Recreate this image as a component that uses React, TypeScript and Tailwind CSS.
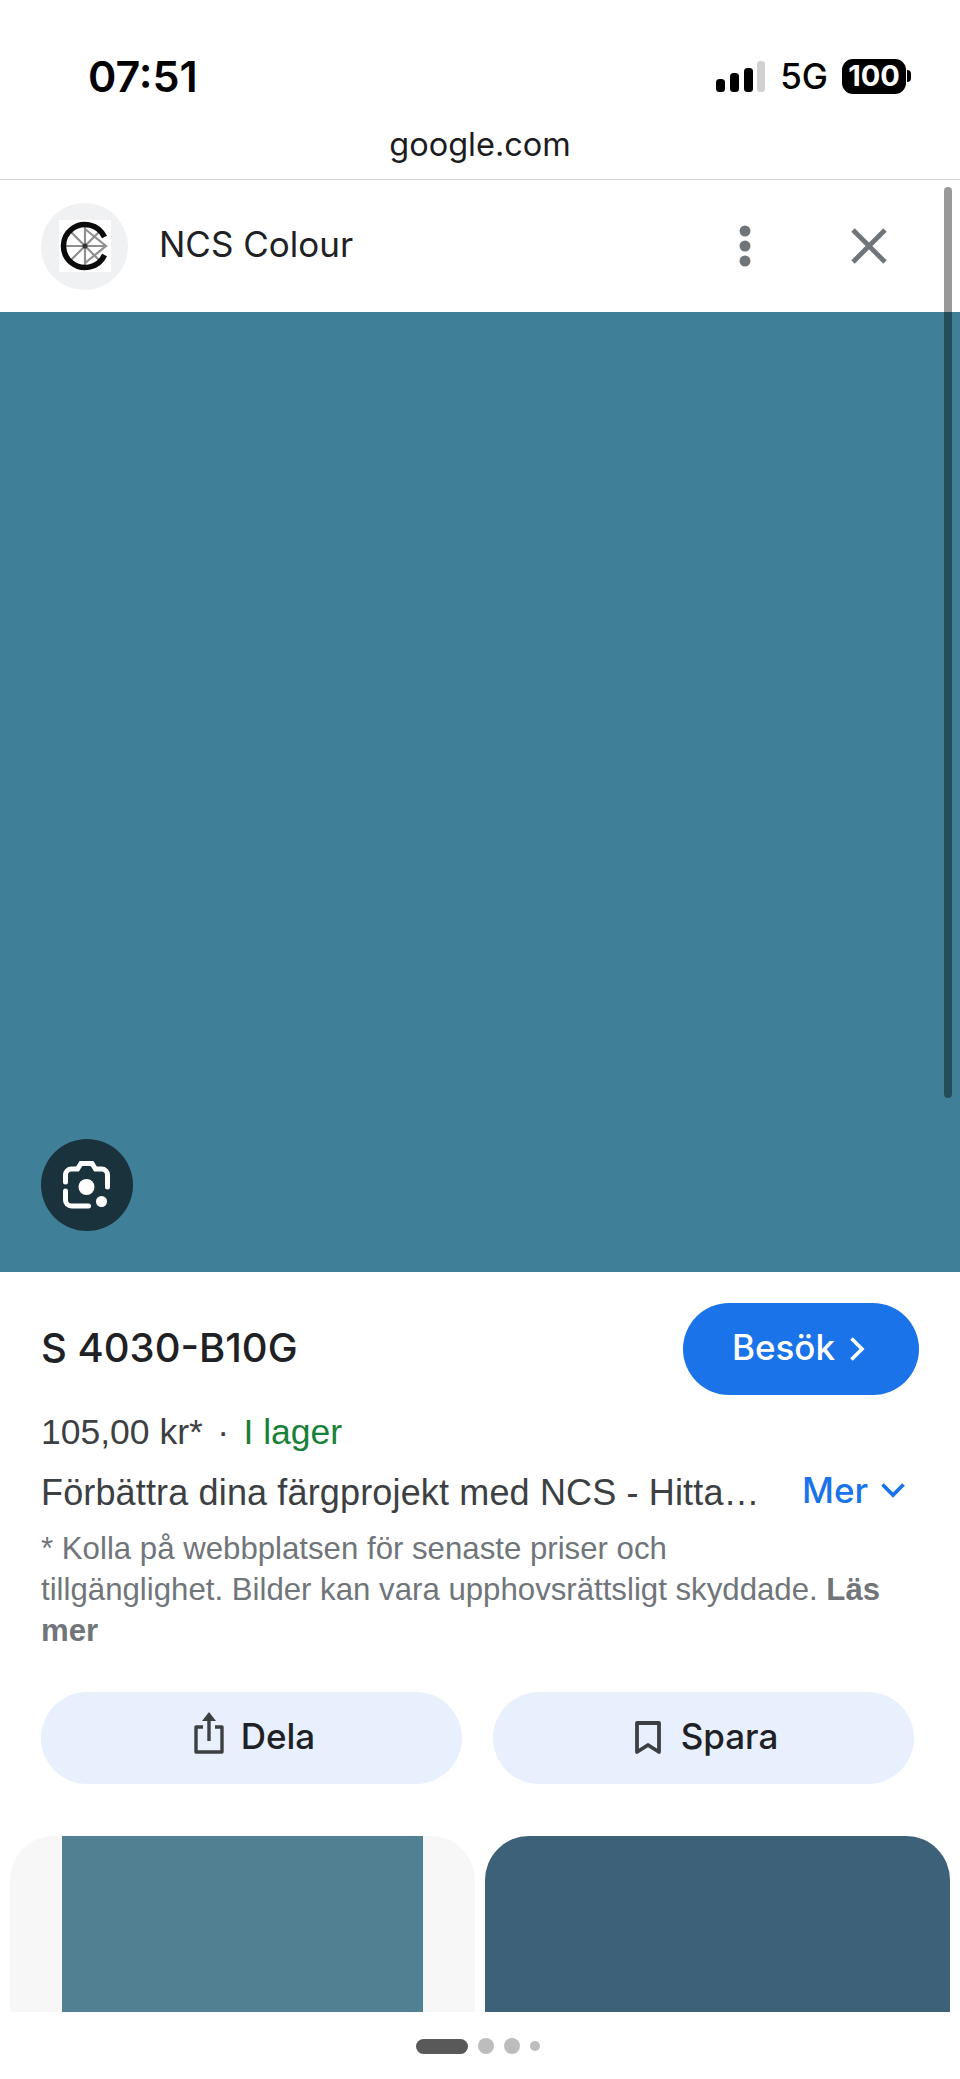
import React from 'react';

// ─── Icons ────────────────────────────────────────────────────────────────────

const SignalIcon = () => (
    <svg width="49" height="31" viewBox="0 0 49 31" className="block">
        <rect x="0" y="18" width="9" height="13" rx="3.5" fill="#000" />
        <rect x="14" y="12" width="9" height="19" rx="3.5" fill="#000" />
        <rect x="28" y="7" width="9" height="24" rx="3.5" fill="#000" />
        <rect x="41" y="0" width="8" height="31" rx="3.5" fill="#d0d0d0" />
    </svg>
);

const NcsLogo = () => (
    <svg width="52" height="52" viewBox="0 0 52 52" className="block bg-white">
        <g stroke="#8f8f8f" strokeWidth="2.2" fill="none">
            <path d="M6 26H47M26 6V46M12 12L40 40M12 40L40 12" />
            <path d="M26 9L47 26L26 43" />
        </g>
        <circle cx="26" cy="26" r="2.5" fill="#333" />
        <path d="M45.500 17A21.500 21.500 0 1 0 45.500 35" fill="none" stroke="#0b0b0b" strokeWidth="5.500" />
    </svg>
);

const MoreIcon = () => (
    <svg width="14" height="44" viewBox="0 0 14 44" className="block">
        <circle cx="7" cy="7" r="5.500" fill="#70757a" />
        <circle cx="7" cy="22" r="5.500" fill="#70757a" />
        <circle cx="7" cy="37" r="5.500" fill="#70757a" />
    </svg>
);

const CloseIcon = () => (
    <svg width="38" height="38" viewBox="0 0 38 38" className="block">
        <path d="M3 3L35 35M35 3L3 35" stroke="#70757a" strokeWidth="4.800" fill="none" />
    </svg>
);

const LensIcon = () => (
    <svg width="48" height="50" viewBox="0 0 48 50" className="block">
        <g fill="none" stroke="#fff" strokeWidth="5" strokeLinecap="round">
            <path d="M2.500 22V15a6 6 0 0 1 6-6h6l3.500-5.500h11L32.500 9h6a6 6 0 0 1 6 6v12" />
            <path d="M2.500 31v9a6 6 0 0 0 6 6h17" />
        </g>
        <circle cx="23.500" cy="27" r="8" fill="#fff" />
        <circle cx="38.500" cy="41.500" r="5.500" fill="#fff" />
    </svg>
);

const ShareIcon = () => (
    <svg width="30" height="42" viewBox="0 0 30 42" className="block -mt-[10px]">
        <g fill="none" stroke="#3c4043" strokeWidth="3.400">
            <path d="M9 15H2V40H28V15H21" strokeLinejoin="round" />
            <path d="M15 29V3" />
        </g>
        <path d="M15 0L22 9H8Z" fill="#3c4043" />
    </svg>
);

const BookmarkIcon = () => (
    <svg width="26" height="35" viewBox="0 0 26 35" className="block">
        <path d="M2 2H24V31L13 24L2 31Z" fill="none" stroke="#3c4043" strokeWidth="3.800" strokeLinejoin="round" />
    </svg>
);

// ─── Page ─────────────────────────────────────────────────────────────────────

const App: React.FC = () => {
    return (
        <div className="relative w-[960px] h-[2079px] overflow-hidden bg-white font-['Inter',sans-serif] text-[#1f1f1f]">

            {/* Status bar */}
            <div className="h-[112px] pl-[88px] pr-[49px] pt-[50px] flex items-start justify-between">
                <span className="text-[43px] leading-[52px] font-semibold text-black">07:51</span>
                <div className="flex items-center h-[52px]">
                    <SignalIcon />
                    <span className="ml-[15px] text-[35px] font-medium text-black">5G</span>
                    <div className="ml-[14px] w-[64px] h-[35px] rounded-[11px] bg-black text-white text-[29px] font-bold flex items-center justify-center">100</div>
                    <div className="ml-[1px] w-[4px] h-[12px] rounded-r-full bg-black" />
                </div>
            </div>

            {/* URL bar */}
            <div className="h-[68px] border-b border-[#d6d6d6] flex items-center justify-center pb-[2px]">
                <span className="text-[32.5px] leading-[40px] text-[#1c1c1e]">google.com</span>
            </div>

            {/* Result header */}
            <div className="h-[132px] pl-[41px] pr-[72px] flex items-center">
                <div className="w-[87px] h-[87px] rounded-full bg-[#f0f1f2] flex items-center justify-center">
                    <NcsLogo />
                </div>
                <span className="ml-[31px] -mt-[3px] text-[35px] text-[#202124]">NCS Colour</span>
                <div className="ml-auto flex items-center gap-[98px]">
                    <MoreIcon />
                    <CloseIcon />
                </div>
            </div>

            {/* Main image */}
            <div className="h-[960px] bg-[#3f7f98] pl-[41px] pt-[827px]">
                <div className="w-[92px] h-[92px] rounded-full bg-[#1a323c] flex items-center justify-center">
                    <LensIcon />
                </div>
            </div>

            {/* Product info */}
            <div className="pl-[41px] pr-[41px] pt-[31px] flex items-center justify-between">
                <span className="text-[40px] font-medium text-[#202124] -mt-[2px]">S 4030-B10G</span>
                <button className="w-[236px] h-[92px] rounded-full bg-[#1a73e8] text-white text-[35px] font-medium flex items-center justify-center gap-[14px]">
                    <span className="-mt-[3px] -ml-[5px]">Besök</span>
                    <svg width="16" height="26" viewBox="0 0 16 26"><path d="M2.500 2.500L13 13L2.500 23.500" fill="none" stroke="#fff" strokeWidth="3.600" /></svg>
                </button>
            </div>

            <div className="pl-[41px] mt-[17px] font-['Liberation_Sans',sans-serif] text-[35.5px] leading-[40px] text-[#3c4043]">
                105,00 kr* <span className="mx-[4.500px]">·</span> <span className="text-[#188038]">I lager</span>
            </div>

            <div className="pl-[41px] pr-[54px] mt-[21px] flex items-center justify-between">
                <span className="font-['Liberation_Sans',sans-serif] text-[36px] tracking-[0.15px] leading-[40px] text-[#3c4043]">Förbättra dina färgprojekt med NCS - Hitta…</span>
                <span className="flex items-center gap-[12px] text-[35px] leading-[40px] font-medium text-[#1a73e8] -mt-[6px]">
                    Mer
                    <svg width="26" height="16" viewBox="0 0 26 16"><path d="M2.500 2.500L13 13L23.500 2.500" fill="none" stroke="#1a73e8" strokeWidth="3.800" /></svg>
                </span>
            </div>

            <p className="pl-[41px] pr-[30px] mt-[15px] font-['Liberation_Sans',sans-serif] text-[31.2px] leading-[41px] text-[#70757a]">
                * Kolla på webbplatsen för senaste priser och<br />
                tillgänglighet. Bilder kan vara upphovsrättsligt skyddade. <b className="font-bold">Läs<br />mer</b>
            </p>

            {/* Actions */}
            <div className="pl-[41px] mt-[41px] flex gap-[31px]">
                <button className="w-[421px] h-[92px] rounded-full bg-[#e8f0fe] pl-[6px] flex items-center justify-center gap-[17px] text-[35px] font-medium text-[#202124]">
                    <ShareIcon />
                    <span className="-mt-[3px]">Dela</span>
                </button>
                <button className="w-[421px] h-[92px] rounded-full bg-[#e8f0fe] pl-[6px] flex items-center justify-center gap-[20px] text-[35px] font-medium text-[#202124]">
                    <BookmarkIcon />
                    <span className="-mt-[3px]">Spara</span>
                </button>
            </div>

            {/* Related images */}
            <div className="pl-[10px] mt-[52px] flex gap-[10px]">
                <div className="w-[465px] h-[176px] rounded-t-[44px] overflow-hidden bg-[#f7f7f7] flex justify-center">
                    <div className="w-[361px] h-full bg-[#528093]" />
                </div>
                <div className="w-[465px] h-[176px] rounded-t-[44px] bg-[#3d6179]" />
            </div>

            {/* Pager */}
            <div className="mt-[26px] ml-[416px] flex items-center gap-[10px]">
                <div className="w-[52px] h-[15px] rounded-full bg-[#595959]" />
                <div className="w-[16px] h-[16px] rounded-full bg-[#bdbdbd]" />
                <div className="w-[16px] h-[16px] rounded-full bg-[#bdbdbd]" />
                <div className="w-[10px] h-[10px] rounded-full bg-[#bdbdbd]" />
            </div>

            {/* Scrollbar */}
            <div className="absolute left-[944px] top-[187px] w-[8px] h-[911px] rounded-full bg-black/40" />
        </div>
    );
};

export default App;
